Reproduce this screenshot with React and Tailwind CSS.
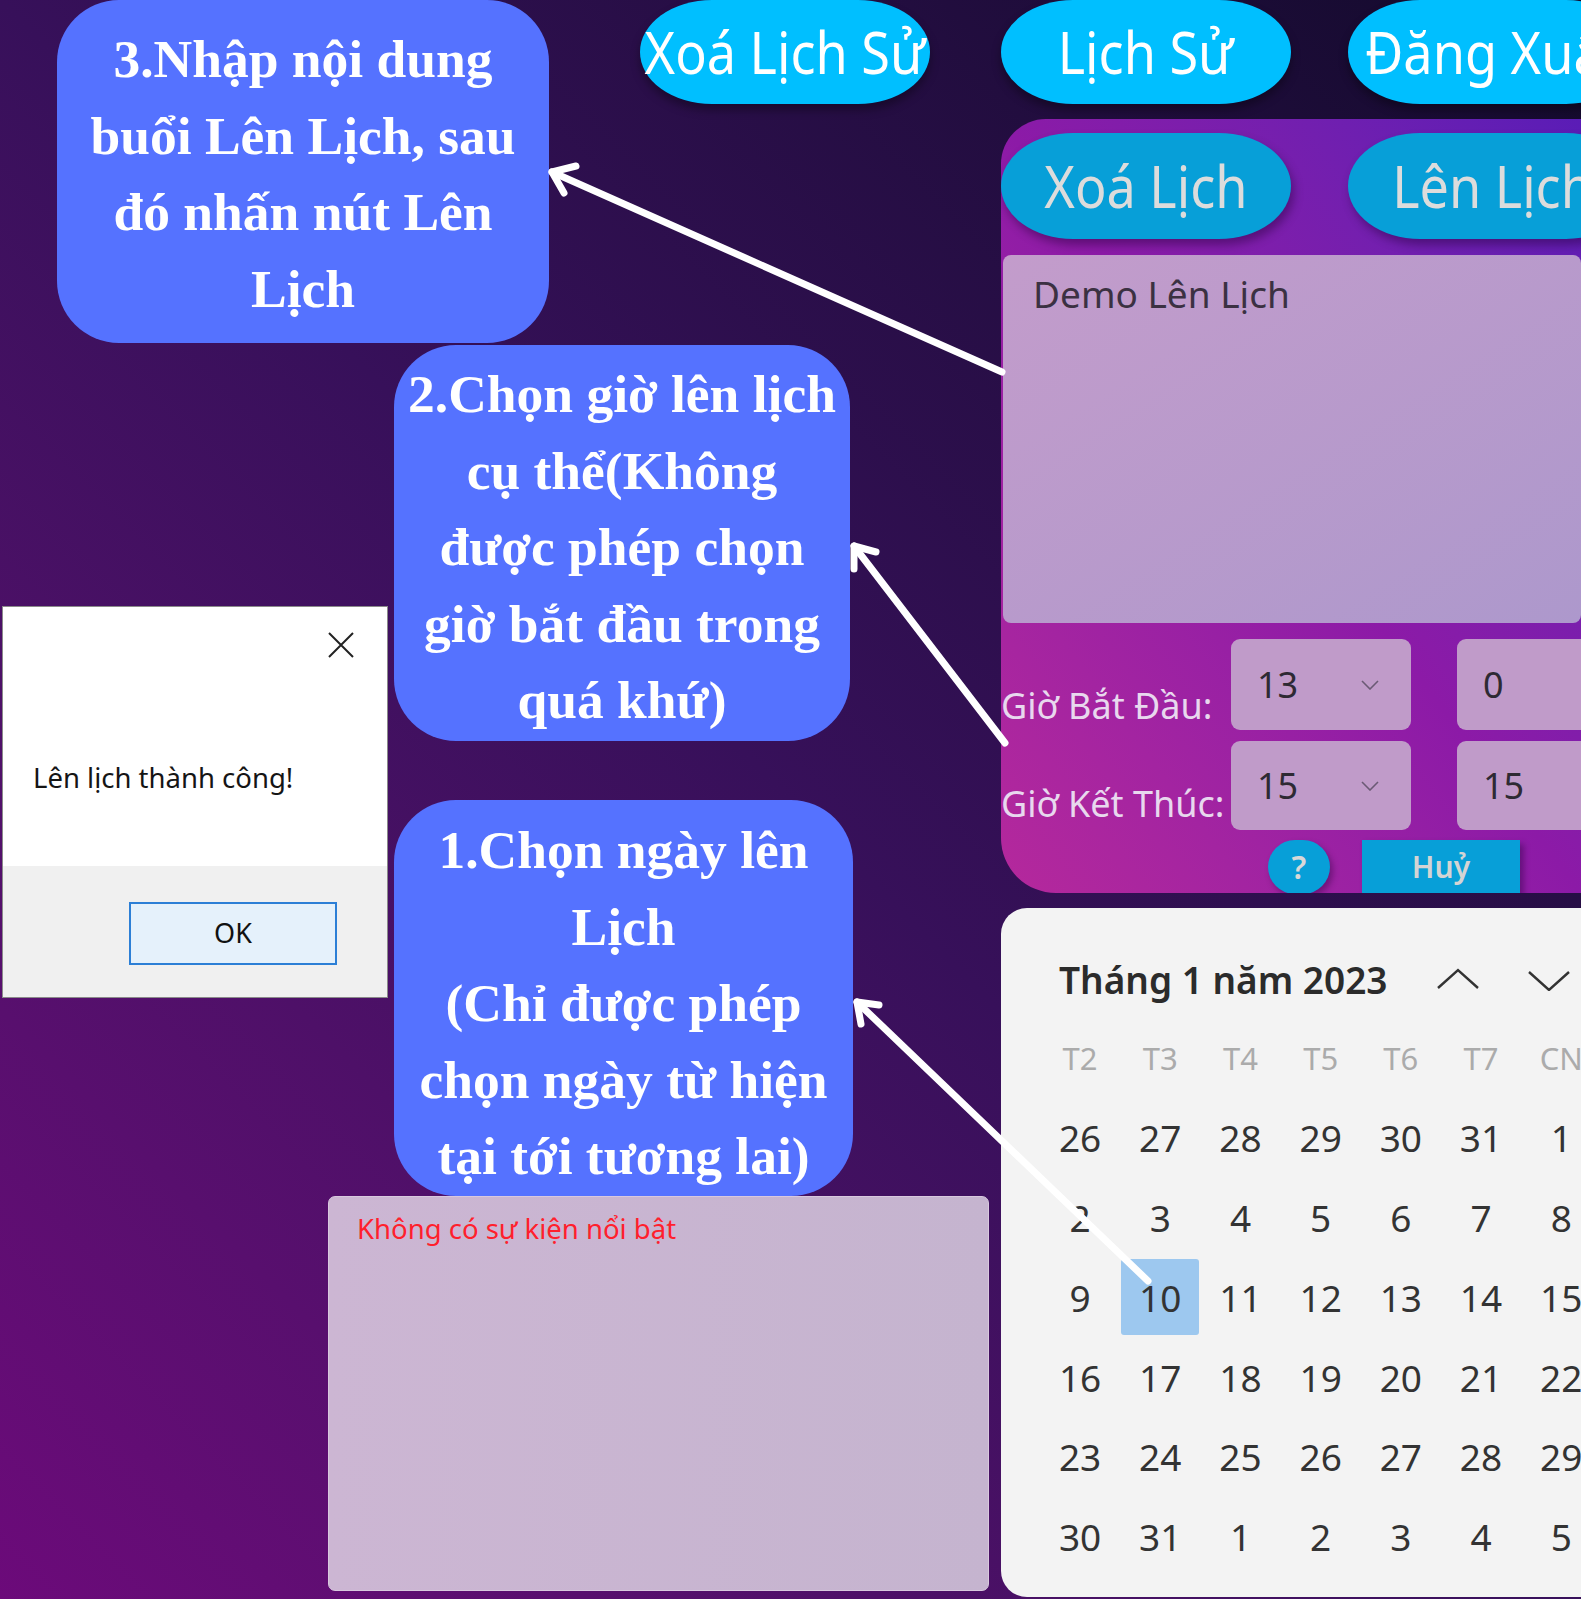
const UI = "font-['Noto_Sans','Open_Sans',sans-serif]";
const SERIF = "font-['Liberation_Serif','Times_New_Roman',serif]";

const WEEKDAYS = ["T2", "T3", "T4", "T5", "T6", "T7", "CN"];
const WEEKS = [
  [26, 27, 28, 29, 30, 31, 1],
  [2, 3, 4, 5, 6, 7, 8],
  [9, 10, 11, 12, 13, 14, 15],
  [16, 17, 18, 19, 20, 21, 22],
  [23, 24, 25, 26, 27, 28, 29],
  [30, 31, 1, 2, 3, 4, 5],
];

function TopPill({ children, className = "" }) {
  return (
    <div
      className={`flex h-[104px] w-[290px] shrink-0 items-center justify-center rounded-[72px/52px] bg-[#00bfff] shadow-[0_6px_10px_rgba(0,0,0,0.35)] ${className}`}
    >
      <span className="inline-block scale-x-[0.9] whitespace-nowrap text-[58px] leading-none text-white">
        {children}
      </span>
    </div>
  );
}

function PanelPill({ children, className = "" }) {
  return (
    <div
      className={`flex h-[106px] w-[290px] shrink-0 items-center justify-center rounded-[72px/53px] bg-[#079fd8] shadow-[3px_6px_10px_rgba(40,0,60,0.45)] ${className}`}
    >
      <span className="inline-block scale-x-[0.9] whitespace-nowrap text-[58px] leading-none text-[#dcdcdc]">
        {children}
      </span>
    </div>
  );
}

function SmallChevron() {
  return (
    <svg width="18" height="10" viewBox="0 0 18 10" fill="none">
      <path d="M1 1 L9 9 L17 1" stroke="#6b5a75" strokeWidth="1.6" />
    </svg>
  );
}

function TimeSelect({ value, chevron, h }) {
  return (
    <div
      className={`flex w-[180px] shrink-0 items-center justify-between rounded-[9px] bg-[#c09bc9] pl-[26px] pr-[32px] ${h}`}
    >
      <span className="text-[36px] leading-none text-[#2e2a33]">{value}</span>
      {chevron && <SmallChevron />}
    </div>
  );
}

function Callout({ className, lines }) {
  return (
    <div
      className={`absolute rounded-[62px] bg-[#5572ff] text-center text-[53.5px] font-bold leading-[76.5px] text-white ${SERIF} ${className}`}
    >
      {lines.map((l, i) => (
        <div key={i} className="whitespace-nowrap">
          {l}
        </div>
      ))}
    </div>
  );
}

export default function App() {
  return (
    <div
      className={`relative h-[1599px] w-[1581px] overflow-hidden bg-linear-to-tr from-[#6c0a7a] via-[#37105a] to-[#130a2c] ${UI}`}
    >
      {/* top buttons */}
      <div className="flex h-[104px] pl-[640px]">
        <TopPill>Xoá Lịch Sử</TopPill>
        <TopPill className="ml-[71px]">Lịch Sử</TopPill>
        <TopPill className="ml-[57px]">Đăng Xuất</TopPill>
      </div>

      <div className="flex h-[1495px]">
        {/* left area */}
        <div className="flex w-[1001px] shrink-0 flex-col justify-end pb-[8px] pl-[328px]">
          <div className="h-[395px] w-[661px] rounded-[7px] border border-[#d8c8de] bg-linear-to-r from-[#ccb6d3] to-[#c5b4cf] px-[28px] pt-[12px]">
            <p className="text-[27.5px] leading-[40px] text-[#ff1f2d]">Không có sự kiện nổi bật</p>
          </div>
        </div>

        {/* right column */}
        <div className="flex w-[580px] shrink-0 flex-col">
          <div className="mt-[15px] flex h-[774px] flex-col overflow-hidden rounded-tl-[45px] rounded-bl-[55px] bg-linear-to-tr from-[#b5289c] via-[#8c1aa7] to-[#5a1cb6] pt-[14px]">
            <div className="flex">
              <PanelPill>Xoá Lịch</PanelPill>
              <PanelPill className="ml-[57px]">Lên Lịch</PanelPill>
            </div>

            <div className="ml-[2px] mt-[16px] h-[368px] rounded-[8px] bg-linear-to-br from-[#c39ccb] to-[#ad98cc] px-[30px] pt-[14px]">
              <p className="text-[37px] leading-[50px] text-[#3b3142]">Demo Lên Lịch</p>
            </div>

            <div className="mt-[16px] flex items-end">
              <span className="w-[230px] shrink-0 whitespace-nowrap pb-[2px] text-[36px] leading-[44px] text-[#e8d8ee]">
                Giờ Bắt Đầu:
              </span>
              <TimeSelect value="13" chevron h="h-[91px]" />
              <div className="ml-[46px]">
                <TimeSelect value="0" h="h-[91px]" />
              </div>
            </div>

            <div className="mt-[11px] flex items-end">
              <span className="w-[230px] shrink-0 whitespace-nowrap pb-[4px] text-[36px] leading-[44px] text-[#e8d8ee]">
                Giờ Kết Thúc:
              </span>
              <TimeSelect value="15" chevron h="h-[89px]" />
              <div className="ml-[46px]">
                <TimeSelect value="15" h="h-[89px]" />
              </div>
            </div>

            <div className="mt-[10px] flex h-[53px] pl-[267px]">
              <div className="flex h-[54px] w-[62px] items-center justify-center rounded-full bg-[#079fd8] shadow-[3px_4px_6px_rgba(40,0,60,0.4)]">
                <span className="text-[32px] font-semibold leading-none text-[#d8d8d8]">?</span>
              </div>
              <div className="ml-[32px] flex h-[53px] w-[158px] items-center justify-center bg-[#079fd8] shadow-[4px_4px_6px_rgba(40,0,60,0.4)]">
                <span className="text-[30px] font-semibold leading-none text-[#d4d4d4]">Huỷ</span>
              </div>
            </div>
          </div>

          {/* calendar */}
          <div className="mt-[15px] h-[689px] overflow-hidden rounded-l-[26px] bg-[#f3f3f3] pt-[32px]">
            <div className="flex h-[78px] items-center pl-[58px]">
              <span className="w-[377px] shrink-0 whitespace-nowrap text-[37px] font-semibold leading-none text-[#2b2b2b]">
                Tháng 1 năm 2023
              </span>
              <svg width="44" height="24" viewBox="0 0 44 24" fill="none" className="shrink-0">
                <path d="M2 21 L22 3 L42 21" stroke="#333" strokeWidth="2.4" />
              </svg>
              <svg width="44" height="24" viewBox="0 0 44 24" fill="none" className="ml-[47px] shrink-0">
                <path d="M2 5 L22 23 L42 5" stroke="#333" strokeWidth="2.4" />
              </svg>
            </div>

            <div className="grid grid-cols-[repeat(7,80.2px)] pl-[39px]">
              {WEEKDAYS.map((d) => (
                <div key={d} className="flex h-[80px] items-center justify-center text-[31px] text-[#ababab]">
                  {d}
                </div>
              ))}
              {WEEKS.flat().map((n, i) => (
                <div key={i} className="flex h-[79.8px] items-center justify-center">
                  <div
                    className={`flex h-[76px] w-[78px] items-center justify-center rounded-[3px] text-[37px] text-[#333] ${
                      n === 10 && i === 15 ? "bg-[#9dc8ef]" : ""
                    }`}
                  >
                    {n}
                  </div>
                </div>
              ))}
            </div>
          </div>
        </div>
      </div>

      {/* message box */}
      <div className="absolute left-[2px] top-[606px] flex h-[392px] w-[386px] flex-col border border-[#8a8a8a] bg-[#f0f0f0]">
        <div className="h-[259px] bg-white">
          <div className="flex justify-end pr-[33px] pt-[25px]">
            <svg width="26" height="26" viewBox="0 0 26 26" fill="none">
              <path d="M1 1 L25 25 M25 1 L1 25" stroke="#222" strokeWidth="2" />
            </svg>
          </div>
          <p className="mt-[102px] pl-[30px] text-[27.5px] leading-[36px] text-[#151515]">Lên lịch thành công!</p>
        </div>
        <div className="pl-[126px] pt-[36px]">
          <div className="flex h-[63px] w-[208px] items-center justify-center border-2 border-[#2c7fd6] bg-[#e5f1fb] text-[27px] text-[#111]">
            OK
          </div>
        </div>
      </div>

      {/* callouts */}
      <Callout
        className="left-[57px] top-0 h-[343px] w-[492px] pt-[21px]"
        lines={["3.Nhập nội dung", "buổi Lên Lịch, sau", "đó nhấn nút Lên", "Lịch"]}
      />
      <Callout
        className="left-[394px] top-[345px] h-[396px] w-[456px] pt-[11px]"
        lines={["2.Chọn giờ lên lịch", "cụ thể(Không", "được phép chọn", "giờ bắt đầu trong", "quá khứ)"]}
      />
      <Callout
        className="left-[394px] top-[800px] h-[396px] w-[459px] pt-[12px]"
        lines={["1.Chọn ngày lên", "Lịch", "(Chỉ được phép", "chọn ngày từ hiện", "tại tới tương lai)"]}
      />

      {/* arrows */}
      <svg className="pointer-events-none absolute left-0 top-0" width="1581" height="1599" fill="none">
        <g stroke="#fff" strokeWidth="7" strokeLinecap="round" strokeLinejoin="round">
          <path d="M1002 372 L552 172" />
          <path d="M576 166 L552 172 L564 193" />
          <path d="M1005 743 L854 546" />
          <path d="M876 552 L854 546 L854 569" />
          <path d="M1148 1281 L857 1002" />
          <path d="M879 1005 L857 1002 L861 1024" />
        </g>
      </svg>
    </div>
  );
}
